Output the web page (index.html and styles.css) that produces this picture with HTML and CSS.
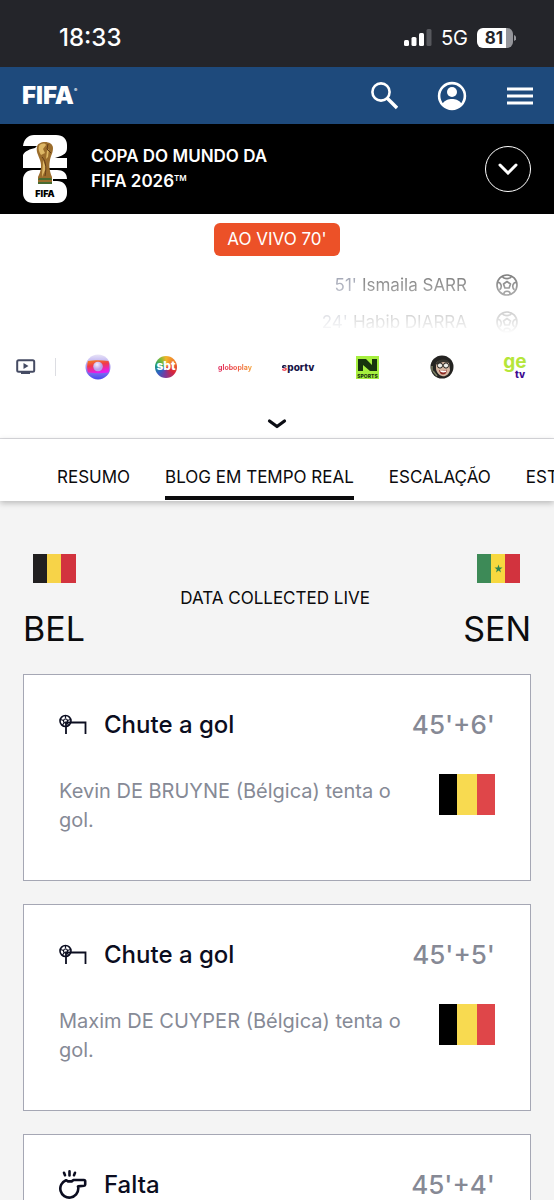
FILE: index.html
```html
<!DOCTYPE html>
<html lang="pt-BR">
<head>
<meta charset="utf-8">
<meta name="viewport" content="width=device-width, initial-scale=1">
<title>Bélgica x Senegal - Copa do Mundo da FIFA 2026</title>
<link rel="stylesheet" href="styles.css">
</head>
<body>

<svg width="0" height="0" class="defs" aria-hidden="true">
	<symbol id="ball" viewBox="0 0 24 24">
		<g fill="none" stroke="currentColor" stroke-width="1.800" stroke-linejoin="round">
			<circle cx="12" cy="12" r="10.900"/>
			<path d="M12 8.200l3.800 2.700-1.500 4.400H9.700l-1.500-4.400z"/>
			<path d="M7 2.500c1 2 3 2.500 5 2.500s4-.500 5-2.500M22.500 9c-2.200 0-3.500 1.200-4 3s0 4 1.700 5.200M1.500 9c2.200 0 3.500 1.200 4 3s0 4-1.700 5.200M8.500 22.200c0-2.200 1.500-3.400 3.500-3.400s3.500 1.200 3.500 3.400"/>
		</g>
	</symbol>
	<symbol id="shot" viewBox="0 0 28 22">
		<g fill="none" stroke="currentColor">
			<circle cx="6.500" cy="7" r="5.500" stroke-width="1.600"/>
			<circle cx="6.500" cy="7" r="2" stroke-width="1.200"/>
			<path stroke-width="1.200" d="M6.500 1.500v3M1.500 5.500l3 1M11.500 5.500l-3 1M3.200 11.500l2-2.800M9.800 11.500l-2-2.800"/>
			<path stroke-width="1.800" d="M7 20V8.500h19.500V20"/>
		</g>
	</symbol>
	<symbol id="whistle" viewBox="0 0 28 30">
		<g fill="none" stroke="currentColor" stroke-width="2.600" stroke-linecap="round" stroke-linejoin="round">
			<path d="M5 2.800l1 2.400M10.500 1.400v4M16 2.800l-1 2.400"/>
			<path d="M7 10.200a9 9 0 1 0 12.300 8.200c0-.800-.100-1.400-.300-2l6-.600c.800-.100 1.200-.500 1.200-1.300v-3.200c0-.800-.500-1.300-1.300-1.300H14.500l-1.800 1.400H9z"/>
		</g>
	</symbol>
</svg>

<div class="app">
	<div class="status">
		<span class="clock">18:33</span>
		<span class="signal">
			<svg width="28" height="18" viewBox="0 0 28 18">
				<g fill="#fff"><rect x="0" y="11" width="5" height="6" rx="1.500"/><rect x="7.500" y="8" width="5" height="9" rx="1.500"/><rect x="15" y="4" width="5" height="13" rx="1.500"/></g>
				<rect x="22.500" y="0" width="5" height="17" rx="1.500" fill="#57585d"/>
			</svg>
			<span class="net">5G</span>
			<span class="battery">81</span>
			<svg class="nub" width="2" height="6" viewBox="0 0 2 6"><path d="M0 0c3 1 3 5 0 6z" fill="#94959a"/></svg>
		</span>
	</div>

	<header class="topbar">
		<a href="#" class="brand">FIFA<sup>®</sup></a>
		<nav class="tools">
			<button type="button" aria-label="Buscar">
				<svg width="28" height="28" viewBox="0 0 28 28" fill="none" stroke="#fff">
					<circle cx="11" cy="10" r="8.600" stroke-width="2.600"/><path d="M17 16l10 10" stroke-width="3.400"/>
				</svg>
			</button>
			<button type="button" aria-label="Entrar">
				<svg width="30" height="30" viewBox="0 0 30 30">
					<circle cx="15" cy="15" r="12.900" fill="none" stroke="#fff" stroke-width="2.600"/>
					<circle cx="15" cy="11" r="5" fill="#fff"/>
					<path d="M5 23c3-4 6.500-5 10-5s7 1 10 5c-2.500 3.500-6 5-10 5s-7.500-1.500-10-5z" fill="#fff"/>
				</svg>
			</button>
			<button type="button" aria-label="Menu">
				<svg width="28" height="28" viewBox="0 0 28 28"><path d="M1 7h26M1 14h26M1 21h26" stroke="#fff" stroke-width="3"/></svg>
			</button>
		</nav>
	</header>

	<div class="event">
		<svg class="emblem" width="46" height="68" viewBox="0 0 46 68">
			<path fill="#fff" d="M0 11C1 4 5 0 11 0h22c7 0 11 4 11 10v3c0 5-3 7-9 9l-3 1h12v10H0V20c2-4 7-6 12-7l2-2z"/>
			<path fill="#fff" d="M10 35h24c6 0 10 3 10 9H30v2h4c6 0 10 4 10 10v2c0 6-4 10-10 10H10C4 68 0 64 0 58V45c0-6 4-10 10-10z"/>
			<path fill="#9b6d2c" d="M14 12c0-3 4-5 8-5s8 2 8 6c0 5-2 7-3 12s-1 10 2 17v7H15v-7c3-6 4-11 2-17s-4-8-3-13z"/>
			<path fill="#ddb765" d="M16 11c2-3 6-3 7-1l-3 4 2 4-4 2c-2-3-3-6-2-9zM20 25l3 8-4 9c0-6 1-11 1-17zM26 14l-1 8-2 2 1-8z"/>
			<path fill="none" stroke="#633c18" d="M25 9l-1 5 4 4M19 22c3 3 5 9 3 19"/>
			<path fill="#476b31" d="M16 43h12l1 2H15zM15 47h14v2H15z"/>
			<text x="22" y="62" text-anchor="middle">FIFA</text>
		</svg>
		<h1>COPA DO MUNDO DA<br>FIFA 2026<sup>TM</sup></h1>
		<button type="button" class="expand" aria-label="Abrir">
			<svg width="20" height="12" viewBox="0 0 20 12"><path d="M2 2l8 8 8-8" fill="none" stroke="#fff" stroke-width="3" stroke-linecap="round"/></svg>
		</button>
	</div>

	<section class="match">
		<span class="live">AO VIVO 70'</span>
		<ul class="scorers">
			<li><span class="min">51'</span> Ismaila SARR <svg width="22" height="22"><use href="#ball"/></svg></li>
			<li><span class="min">24'</span> Habib DIARRA <svg width="22" height="22"><use href="#ball"/></svg></li>
		</ul>
		<div class="channels">
			<span class="tv">
				<svg width="20" height="18" viewBox="0 0 20 18"><rect x="1.200" y="2.200" width="17" height="11.600" rx="1.500" fill="none" stroke="#454b63" stroke-width="2"/><path d="M7.500 5v6l5-3zM5 14h9v2H5z" fill="#454b63"/></svg>
			</span>
			<a href="#" aria-label="Globo">
				<svg width="26" height="26" viewBox="0 0 26 26">
					<defs>
						<linearGradient id="gl1" x2="0" y2="1"><stop offset="0" stop-color="#e9e4f7"/><stop offset=".450" stop-color="#a99bf0"/><stop offset="1" stop-color="#4a46ef"/></linearGradient>
						<linearGradient id="gl2" x2=".300" y2="1"><stop offset="0" stop-color="#f58a1c"/><stop offset=".450" stop-color="#f03a4a"/><stop offset="1" stop-color="#e41cf0"/></linearGradient>
						<radialGradient id="gl3" cx=".400" cy=".300"><stop offset="0" stop-color="#f6eefc"/><stop offset="1" stop-color="#b9a0ec"/></radialGradient>
					</defs>
					<circle cx="13" cy="13" r="12.500" fill="url(#gl1)"/>
					<path d="M3 7c6-1 14-1 20.500 0 1.200 3.500 1.200 8 0 11.500-6.500 1-14 1-20.500 0-1.200-3.500-1.200-8 0-11.500z" fill="url(#gl2)"/>
					<circle cx="13" cy="12.500" r="4.800" fill="url(#gl3)"/>
				</svg>
			</a>
			<a href="#"><span class="sbt">sbt</span></a>
			<a href="#"><span class="globoplay">globoplay</span></a>
			<a href="#"><span class="sportv"><i>s</i>portv</span></a>
			<a href="#">
				<svg width="23" height="23" viewBox="0 0 23 23">
					<path d="M0 0h23v23H0z" fill="#a6ef3f"/>
					<path d="M2 3h8l6 6V3h5v12h-7L7 9v6H2z" fill="#17330d"/>
					<text class="nsports" x="11.500" y="21.500" text-anchor="middle">SPORTS</text>
				</svg>
			</a>
			<a href="#" aria-label="CazéTV">
				<svg width="24" height="24" viewBox="0 0 24 24">
					<circle cx="12" cy="12" r="11.500" fill="#242321"/>
					<path d="M6 8c3-3 10-4 13 0l1 7c-1 5-5 7-8 6-4-1-6-5-6-8z" fill="#d6b5a0"/>
					<path d="M5 10c1-6 12-8 15-2l-7-1-5 2z" fill="#37352f"/>
					<g fill="#efeee8" stroke="#25231f"><circle cx="10" cy="10.500" r="2.600"/><circle cx="16" cy="10.500" r="2.600"/></g>
					<path d="M9 15c3 1.500 6 1 8-.500 0 3-1.500 5-4 5s-3.500-2-4-4.500z" fill="#8e2a24"/>
					<path d="M10 15.300c2.500 1 5 .700 6.500 0l-.500 1.700c-2 .600-4 .500-5.500-.200z" fill="#fff"/>
					<path d="M2 11v5M3 16l4 5" stroke="#7b8063" stroke-width="1.500"/>
				</svg>
			</a>
			<a href="#" class="getv"><b>ge</b><em>tv</em></a>
		</div>
		<button type="button" class="more" aria-label="Mais">
			<svg width="20" height="12" viewBox="0 0 20 12"><path d="M2.500 3L10 8.500 17.500 3" fill="none" stroke="#0b0d14" stroke-width="3.200" stroke-linecap="round" stroke-linejoin="round"/></svg>
		</button>
	</section>

	<nav class="tabs">
		<a href="#">RESUMO</a>
		<a href="#" class="active">BLOG EM TEMPO REAL</a>
		<a href="#">ESCALAÇÃO</a>
		<a href="#">ESTATÍSTICAS</a>
	</nav>

	<main class="feed">
		<div class="teams">
			<div class="team">
				<svg width="43" height="29" viewBox="0 0 43 29"><path fill="#211f20" d="M0 0h15v29H0z"/><path fill="#f7d348" d="M14 0h15v29H14z"/><path fill="#d2333e" d="M28 0h15v29H28z"/></svg>
				<span>BEL</span>
			</div>
			<p>DATA COLLECTED LIVE</p>
			<div class="team away">
				<svg width="43" height="29" viewBox="0 0 43 29"><path fill="#3d8a57" d="M0 0h15v29H0z"/><path fill="#f7d83f" d="M14 0h15v29H14z"/><path fill="#d2333e" d="M28 0h15v29H28z"/><path fill="#2f8550" d="M21.500 10.500l1 3h3l-2.400 1.900.9 3-2.500-1.800-2.500 1.800.9-3-2.400-1.900h3z"/></svg>
				<span>SEN</span>
			</div>
		</div>

		<article class="card">
			<header>
				<svg width="28" height="22"><use href="#shot"/></svg>
				<h2>Chute a gol</h2>
				<time>45'+6'</time>
			</header>
			<div class="detail">
				<p>Kevin DE BRUYNE (Bélgica) tenta o gol.</p>
				<span class="flag"></span>
			</div>
		</article>

		<article class="card">
			<header>
				<svg width="28" height="22"><use href="#shot"/></svg>
				<h2>Chute a gol</h2>
				<time>45'+5'</time>
			</header>
			<div class="detail">
				<p>Maxim DE CUYPER (Bélgica) tenta o gol.</p>
				<span class="flag"></span>
			</div>
		</article>

		<article class="card">
			<header>
				<svg width="28" height="30"><use href="#whistle"/></svg>
				<h2>Falta</h2>
				<time>45'+4'</time>
			</header>
		</article>
	</main>
</div>

</body>
</html>
```
FILE: styles.css
```css
* {
	box-sizing: border-box;
}
body {
	margin: 0;
	font-family: Inter, "Liberation Sans", sans-serif;
	font-size: 17px;
	color: #0b0b0d;
	background: #f4f4f4;
}
h1, h2, p, ul {
	margin: 0;
	padding: 0;
}
a {
	color: inherit;
	text-decoration: none;
}
button {
	border: 0;
	padding: 0;
	background: none;
	cursor: pointer;
}
svg {
	display: block;
	flex: none;
}
.defs {
	position: absolute;
}
.app {
	display: flex;
	flex-direction: column;
	height: 100vh;
	overflow: hidden;
}
.app > * {
	flex: none;
}

/* phone status bar */
.status {
	display: flex;
	justify-content: space-between;
	align-items: center;
	height: 67px;
	padding: 8px 38px 0 59px;
	background: #24252a;
	color: #fff;
}
.clock {
	font-size: 24px;
	font-weight: 500;
}
.signal {
	display: flex;
	align-items: center;
	gap: 9px;
}
.net {
	font-size: 20px;
}
.battery {
	width: 36px;
	height: 20px;
	border-radius: 6px;
	background: linear-gradient(90deg, #fff 81%, #94959a 81%);
	color: #24252a;
	font-size: 17px;
	font-weight: 700;
	line-height: 20px;
	padding-right: 2px;
	text-align: center;
}
.nub {
	margin-left: -8px;
}

/* site header */
.topbar {
	display: flex;
	justify-content: space-between;
	align-items: center;
	height: 57px;
	padding: 0 20px 0 22px;
	background: #1e4a7c;
	color: #fff;
}
.brand {
	font-size: 24px;
	font-weight: 900;
}
.brand sup {
	font-size: 5px;
	vertical-align: 12px;
}
.tools {
	display: flex;
	align-items: center;
	gap: 39px;
}
.event {
	display: flex;
	align-items: center;
	height: 90px;
	padding: 0 23px;
	background: #000;
	color: #fff;
}
.emblem text {
	font-size: 9px;
	font-weight: 900;
	fill: #000;
}
.event h1 {
	flex: 1;
	margin-left: 22px;
	font-size: 17px;
	font-weight: 600;
	line-height: 25px;
}
.event sup {
	font-size: 8px;
	line-height: 0;
	vertical-align: 6px;
}
.expand {
	display: flex;
	justify-content: center;
	align-items: center;
	width: 46px;
	height: 46px;
	border: 1px solid #fff;
	border-radius: 50%;
}

/* score strip */
.match {
	display: flex;
	flex-direction: column;
	align-items: center;
	padding-top: 9px;
	background: #fff;
	border-bottom: 1px solid #dcdce0;
}
.live {
	padding: 0 13px;
	border-radius: 6px;
	background: #ec5128;
	color: #fff;
	line-height: 33px;
}
.scorers {
	width: 100%;
	height: 80px;
	padding: 10px 36px 0;
	overflow: hidden;
	list-style: none;
	color: #444;
	-webkit-mask-image: linear-gradient(rgba(0, 0, 0, .9), transparent 78px);
	mask-image: linear-gradient(rgba(0, 0, 0, .9), transparent 78px);
}
.scorers li {
	display: flex;
	justify-content: flex-end;
	align-items: center;
	gap: 5px;
	height: 37px;
}
.scorers svg {
	margin-left: 24px;
}
.min {
	color: #757b90;
}
.channels {
	display: grid;
	grid-template-columns: 64fr 68fr 68fr 70fr 56fr 82fr 68fr 78fr;
	align-items: center;
	width: 100%;
	height: 62px;
}
.channels a {
	display: flex;
	justify-content: center;
}
.tv {
	margin-right: 8px;
	padding-left: 16px;
	border-right: 1px solid #dcdde2;
}
.sbt {
	display: flex;
	justify-content: center;
	width: 22px;
	height: 22px;
	border-radius: 50%;
	background: conic-gradient(#f3b52a, #ef7d2c 15%, #d8243c 35%, #7b3a9c 52%, #2d62c4 65%, #1d9a6c 78%, #7bbb3a 90%, #f3b52a);
	color: #fff;
	font-size: 12px;
	font-weight: 800;
	line-height: 20px;
}
.globoplay {
	font-size: 7px;
	font-weight: 700;
	color: transparent;
	background: linear-gradient(90deg, #e0245a, #ec4840 50%, #f4a43a);
	-webkit-background-clip: text;
	background-clip: text;
}
.sportv {
	font-size: 10px;
	font-weight: 800;
	color: #171446;
}
.sportv i {
	font-style: normal;
	background: linear-gradient(#171446 60%, #f04a5c 60%);
	-webkit-background-clip: text;
	background-clip: text;
	color: transparent;
}
.nsports {
	font-size: 5px;
	font-weight: 800;
	fill: #17330d;
}
.channels .getv {
	flex-direction: column;
	align-items: center;
}
.getv b {
	font-size: 19px;
	font-weight: 700;
	line-height: 13px;
	color: #b5e63a;
}
.getv em {
	margin-left: 10px;
	font-size: 10px;
	font-style: normal;
	font-weight: 800;
	line-height: 12px;
	color: #3d0a91;
}
.more {
	padding: 20px 40px 8px;
}

.tabs {
	position: relative;
	display: flex;
	gap: 35px;
	height: 62px;
	padding: 16px 0 1px 57px;
	overflow: hidden;
	background: #fff;
	box-shadow: 0 2px 6px rgba(0, 0, 0, .25);
	line-height: 44px;
	white-space: nowrap;
}
.tabs .active {
	border-bottom: 4px solid #0b0b0d;
}

/* live blog */
.app > .feed {
	flex: 1;
	min-height: 0;
	padding: 53px 23px 0;
	overflow: auto;
	scrollbar-width: none;
}
.teams {
	display: flex;
	justify-content: space-between;
	align-items: center;
	margin-bottom: 24px;
}
.teams p {
	margin-top: -8px;
}
.team {
	display: flex;
	flex-direction: column;
	align-items: flex-start;
	gap: 24px;
	font-size: 34px;
	line-height: 43px;
}
.team svg {
	margin: 0 11px 0 10px;
}
.away {
	align-items: flex-end;
}
.card {
	height: 207px;
	margin-bottom: 23px;
	padding: 33px 35px;
	border: 1px solid #a5a7b4;
	background: #fff;
}
.card header {
	display: flex;
	align-items: center;
	height: 34px;
	color: #0b0d20;
}
.card h2 {
	flex: 1;
	margin-left: 17px;
	font-size: 24px;
	font-weight: 500;
	line-height: 28px;
}
.card time {
	font-size: 26px;
	font-weight: 500;
	line-height: 28px;
	color: #868995;
}
.detail {
	display: flex;
	justify-content: space-between;
	gap: 30px;
	margin-top: 32px;
}
.detail p {
	margin-top: 3px;
	font-size: 20px;
	line-height: 29px;
	color: #868a96;
}
.flag {
	flex: none;
	width: 56px;
	height: 41px;
	background: linear-gradient(90deg, #000 33%, #f8da50 33% 67%, #df4649 67%);
}
```
